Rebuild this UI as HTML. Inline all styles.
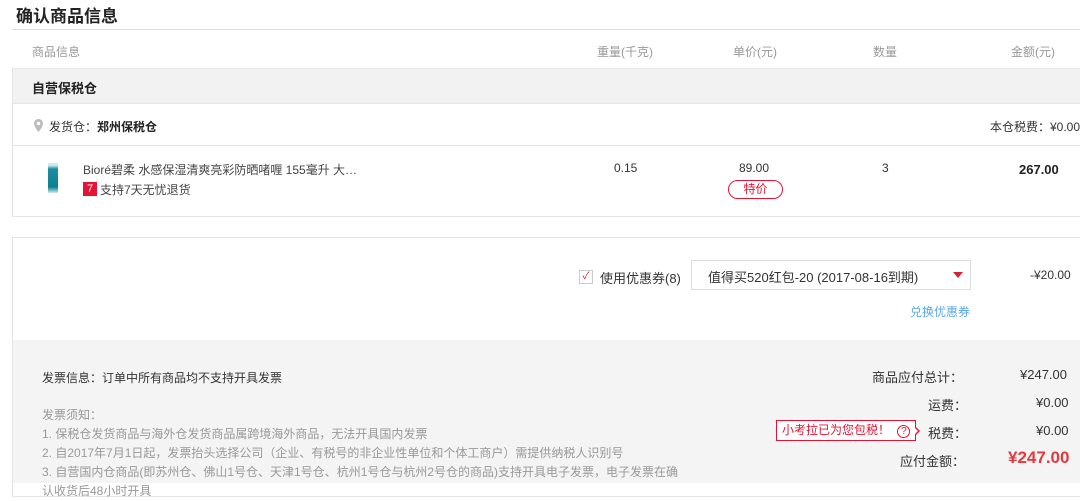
<!DOCTYPE html>
<html><head><meta charset="utf-8"><style>
*{margin:0;padding:0;box-sizing:border-box}
body{width:1080px;height:483px;overflow:hidden;background:#fff;font-family:"Liberation Sans","Noto Sans CJK SC",sans-serif;font-size:12px;color:#333;position:relative}
.a{position:absolute;white-space:nowrap}
.g{color:#999}
</style></head><body>
<div class="a" style="left:16px;top:2px;font-size:17px;font-weight:bold;color:#222">确认商品信息</div>
<div class="a" style="left:12px;top:29px;width:1068px;height:1px;background:#ddd"></div>
<div class="a g" style="left:32px;top:43px">商品信息</div>
<div class="a g" style="left:597px;top:43px">重量(千克)</div>
<div class="a g" style="left:733px;top:43px">单价(元)</div>
<div class="a g" style="left:873px;top:43px">数量</div>
<div class="a g" style="left:1011px;top:43px">金额(元)</div>
<div class="a" style="left:12px;top:68px;width:1080px;height:149px;border:1px solid #e5e5e5"></div>
<div class="a" style="left:13px;top:69px;width:1070px;height:35px;background:#f2f2f2;border-bottom:1px solid #e5e5e5"></div>
<div class="a" style="left:32px;top:78px;font-size:13px;font-weight:bold;color:#222">自营保税仓</div>
<svg class="a" style="left:34px;top:119px" width="9" height="13" viewBox="0 0 9 13"><path d="M4.5 0C2 0 0 2 0 4.5 0 7.5 4.5 13 4.5 13S9 7.5 9 4.5C9 2 7 0 4.5 0zM4.5 6.3A1.8 1.8 0 1 1 4.5 2.7 1.8 1.8 0 0 1 4.5 6.3z" fill="#bbb"/></svg>
<div class="a" style="left:49px;top:118px">发货仓：<b style="color:#222">郑州保税仓</b></div>
<div class="a" style="left:990px;top:118px">本仓税费：¥0.00</div>
<div class="a" style="left:13px;top:145px;width:1070px;height:1px;background:#e5e5e5"></div>
<div class="a" style="left:48px;top:163px;width:10px;height:30px;background:linear-gradient(#cfe9ee 0 8%,#1a8fa0 20%,#0f7f8f 80%,#cfe9ee)"></div>
<div class="a" style="left:83px;top:161px;color:#444">Bioré碧柔 水感保湿清爽亮彩防晒啫喱 155毫升 大…</div>
<div class="a" style="left:83px;top:182px;width:14px;height:14px;background:#e31436;color:#fff;font-size:11px;text-align:center;line-height:14px">7</div>
<div class="a" style="left:100px;top:181px;color:#444">支持7天无忧退货</div>
<div class="a" style="left:614px;top:161px">0.15</div>
<div class="a" style="left:739px;top:161px">89.00</div>
<div class="a" style="left:728px;top:180px;width:55px;height:19px;border:1px solid #e31436;border-radius:10px;color:#e31436;text-align:center;line-height:17px">特价</div>
<div class="a" style="left:882px;top:161px">3</div>
<div class="a" style="left:1019px;top:162px;font-weight:bold;font-size:13px;color:#222">267.00</div>
<div class="a" style="left:12px;top:237px;width:1080px;height:260px;border:1px solid #e5e5e5"></div>
<div class="a" style="left:579px;top:270px;width:14px;height:14px;border:1px solid #ccc;color:#e31436;font-size:10px;line-height:12px;text-align:center">✓</div>
<div class="a" style="left:600px;top:268px;font-size:13px">使用优惠券(8)</div>
<div class="a" style="left:691px;top:260px;width:280px;height:30px;border:1px solid #ddd"></div>
<div class="a" style="left:708px;top:267px;font-size:13px">值得买520红包-20 (2017-08-16到期)</div>
<div class="a" style="left:953px;top:272px;width:0;height:0;border-left:5px solid transparent;border-right:5px solid transparent;border-top:6px solid #d0203c"></div>
<div class="a" style="left:1030px;top:268px">-¥20.00</div>
<div class="a" style="left:910px;top:303px;color:#5aa9e6">兑换优惠券</div>
<div class="a" style="left:13px;top:340px;width:1070px;height:143px;background:#f4f4f4"></div>
<div class="a" style="left:42px;top:369px;color:#333">发票信息：订单中所有商品均不支持开具发票</div>
<div class="a g" style="left:42px;top:406px;line-height:19px">发票须知：<br>1. 保税仓发货商品与海外仓发货商品属跨境海外商品，无法开具国内发票<br>2. 自2017年7月1日起，发票抬头选择公司（企业、有税号的非企业性单位和个体工商户）需提供纳税人识别号<br>3. 自营国内仓商品(即苏州仓、佛山1号仓、天津1号仓、杭州1号仓与杭州2号仓的商品)支持开具电子发票，电子发票在确<br>认收货后48小时开具</div>
<div class="a" style="left:872px;top:367px;font-size:13px">商品应付总计：</div>
<div class="a" style="left:1020px;top:367px;font-size:13px">¥247.00</div>
<div class="a" style="left:928px;top:395px;font-size:13px">运费：</div>
<div class="a" style="left:1036px;top:395px;font-size:13px">¥0.00</div>
<div class="a" style="left:776px;top:420px;width:140px;height:21px;border:1px solid #e31436;background:#fff;color:#e31436;font-size:12px;line-height:19px;padding-left:5px">小考拉已为您包税！ <span style="display:inline-block;width:13px;height:13px;border:1px solid #e31436;border-radius:50%;font-size:10px;line-height:11px;text-align:center;margin-left:4px">?</span></div>
<div class="a" style="left:915px;top:426px;width:0;height:0;border-top:5px solid transparent;border-bottom:5px solid transparent;border-left:5px solid #e31436"></div>
<div class="a" style="left:914px;top:427px;width:0;height:0;border-top:4px solid transparent;border-bottom:4px solid transparent;border-left:4px solid #fff"></div>
<div class="a" style="left:928px;top:423px;font-size:13px">税费：</div>
<div class="a" style="left:1036px;top:423px;font-size:13px">¥0.00</div>
<div class="a" style="left:900px;top:451px;font-size:13px">应付金额：</div>
<div class="a" style="left:1008px;top:448px;font-size:17px;font-weight:bold;color:#e4393c">¥247.00</div>
</body></html>
